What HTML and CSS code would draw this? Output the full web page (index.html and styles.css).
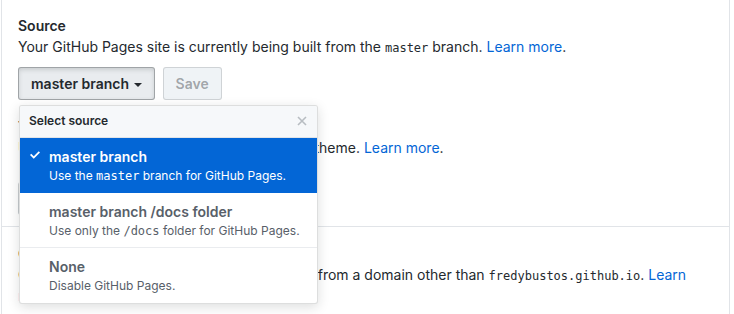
FILE: index.html
```html
<!DOCTYPE html>
<html>
<head>
    <meta charset="utf-8">
    <title>GitHub Pages - Settings</title>
    <link rel="stylesheet" href="styles.css">
</head>
<body>
    <div class="box">
        <div class="box-row">
            <h3 class="row-title">Source</h3>
            <p class="row-note">Your GitHub Pages site is currently being built from the <code>master</code> branch. <a href="#">Learn more</a>.</p>

            <div class="source-form">
                <div class="select-menu">
                    <button class="btn selected">master branch <span class="caret"></span></button>

                    <div class="menu-modal">
                        <div class="menu-header">
                            <span class="menu-title">Select source</span>
                            <svg class="menu-close" width="10" height="10" viewBox="0 0 10 10"><path d="M1 1l8 8M9 1l-8 8" stroke="currentColor" stroke-width="1.6" fill="none"/></svg>
                        </div>
                        <div class="menu-item active">
                            <span class="menu-icon"><svg width="10" height="8" viewBox="0 0 12 9"><path d="M12 1.5L4.5 9 0 4.5 1.5 3 4.5 6 10.5 0z" fill="currentColor"/></svg></span>
                            <div class="menu-text">
                                <div class="item-heading">master branch</div>
                                <div class="item-desc">Use the <code>master</code> branch for GitHub Pages.</div>
                            </div>
                        </div>
                        <div class="menu-item">
                            <span class="menu-icon"></span>
                            <div class="menu-text">
                                <div class="item-heading">master branch /docs folder</div>
                                <div class="item-desc">Use only the <code>/docs</code> folder for GitHub Pages.</div>
                            </div>
                        </div>
                        <div class="menu-item">
                            <span class="menu-icon"></span>
                            <div class="menu-text">
                                <div class="item-heading">None</div>
                                <div class="item-desc">Disable GitHub Pages.</div>
                            </div>
                        </div>
                    </div>
                </div>
                <button class="btn" disabled>Save</button>
            </div>

            <h3 class="row-title theme-title">Theme chooser</h3>
            <p class="row-note">Use a theme to publish this site with a Jekyll theme. <a href="#">Learn more</a>.</p>
            <button class="btn theme-btn">Choose a theme</button>
        </div>

        <div class="box-row">
            <h3 class="row-title">Custom domain</h3>
            <p class="row-note">Custom domains allow you to serve your site from a domain other than <code>fredybustos.github.io</code>. <a href="#">Learn more</a>.</p>
        </div>
    </div>
</body>
</html>
```

FILE: styles.css
```css
* {
    box-sizing: border-box;
}

html, body {
    margin: 0;
    overflow: hidden;
}

body {
    font-family: Inter, "Liberation Sans", Arial, sans-serif;
    font-size: 14px;
    line-height: 1.5;
    color: #24292e;
    background-color: #fff;
}

code {
    font-family: "DejaVu Sans Mono", "Liberation Mono", monospace;
    font-size: 12px;
    line-height: 1;
}

a {
    color: #0366d6;
    text-decoration: none;
}

.box {
    margin-left: 1px;
    width: 729px;
    border-left: 1px solid #e1e4e8;
    border-right: 1px solid #e1e4e8;
}

.box-row {
    padding: 15px 16px 11px;
    border-bottom: 1px solid #e1e4e8;
}

.box-row + .box-row {
    padding: 16px;
}

.row-title {
    margin: 0;
    font-size: 14px;
    font-weight: 600;
    line-height: 21px;
}

.row-note {
    margin: 0;
    line-height: 21px;
}

.theme-title {
    margin-top: 16px;
}

.source-form {
    display: flex;
    gap: 8px;
    margin-top: 10px;
}

.btn {
    display: block;
    font-family: inherit;
    font-size: 14px;
    font-weight: 600;
    line-height: 19px;
    padding: 6px 12px;
    color: #24292e;
    background: linear-gradient(-180deg, #fafbfc 0%, #eff3f6 90%);
    border: 1px solid rgba(27, 31, 35, 0.2);
    border-radius: 3px;
    cursor: pointer;
}

.btn.selected {
    background: #e9ecef;
    border-color: rgba(27, 31, 35, 0.35);
    box-shadow: inset 0 0.15em 0.3em rgba(27, 31, 35, 0.15);
}

.btn:disabled {
    color: rgba(36, 41, 46, 0.4);
    background: #eff3f6;
    border-color: rgba(27, 31, 35, 0.15);
    cursor: default;
}

.theme-btn {
    margin-top: 24px;
}

.caret {
    display: inline-block;
    width: 0;
    height: 0;
    margin-left: 1px;
    vertical-align: middle;
    border-top: 4px solid #24292e;
    border-left: 4px solid transparent;
    border-right: 4px solid transparent;
}

.select-menu {
    position: relative;
    display: flex;
}

.menu-modal {
    position: absolute;
    top: 38px;
    left: 1px;
    z-index: 10;
    width: 299px;
    background-color: #fff;
    border: 1px solid rgba(27, 31, 35, 0.15);
    border-radius: 3px;
    box-shadow: 0 3px 12px rgba(27, 31, 35, 0.15);
    overflow: hidden;
}

.menu-header {
    display: flex;
    align-items: center;
    justify-content: space-between;
    padding: 7px 10px 8px 9px;
    background-color: #f6f8fa;
    border-bottom: 1px solid #e1e4e8;
}

.menu-title {
    font-size: 12px;
    font-weight: 600;
    line-height: 16px;
}

.menu-close {
    display: block;
    color: #b8bdc2;
}

.menu-item {
    display: flex;
    padding: 9px 10px 7px;
    color: #586069;
    border-bottom: 1px solid #eaecef;
}

.menu-item:last-child {
    border-bottom: none;
    padding-bottom: 8px;
}

.menu-item.active {
    color: #fff;
    background-color: #0366d6;
    border-bottom-color: #0366d6;
}

.menu-icon {
    flex: 0 0 19px;
    padding-top: 4px;
}

.menu-icon svg {
    display: block;
}

.item-heading {
    font-weight: 600;
    line-height: 20px;
}

.item-desc {
    font-size: 12px;
    line-height: 18px;
}
```
